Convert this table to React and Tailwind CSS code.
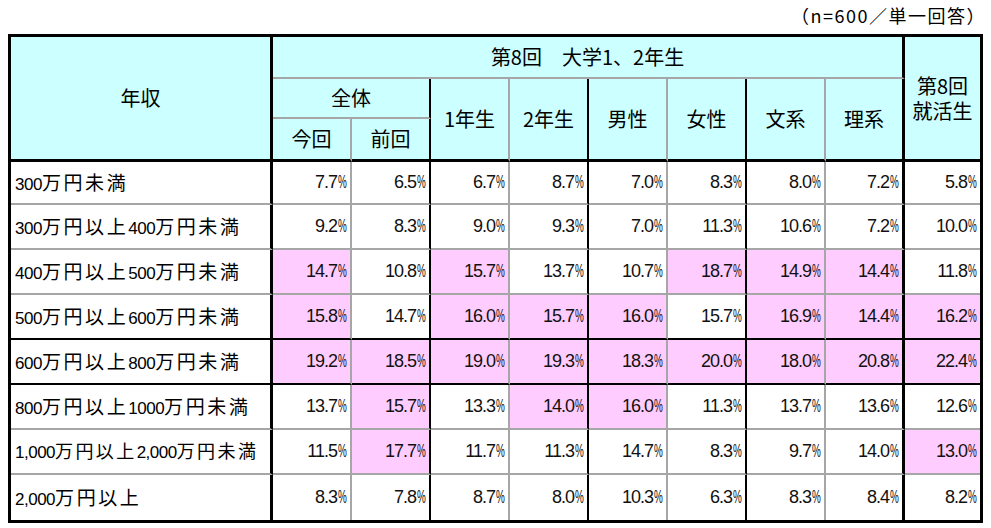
import React from "react";

const rows = [
  { label: "300万円未満", values: ["7.7", "6.5", "6.7", "8.7", "7.0", "8.3", "8.0", "7.2", "5.8"], hi: [] },
  { label: "300万円以上400万円未満", values: ["9.2", "8.3", "9.0", "9.3", "7.0", "11.3", "10.6", "7.2", "10.0"], hi: [] },
  { label: "400万円以上500万円未満", values: ["14.7", "10.8", "15.7", "13.7", "10.7", "18.7", "14.9", "14.4", "11.8"], hi: [0, 2, 5, 6, 7] },
  { label: "500万円以上600万円未満", values: ["15.8", "14.7", "16.0", "15.7", "16.0", "15.7", "16.9", "14.4", "16.2"], hi: [0, 2, 3, 4, 6, 7, 8] },
  { label: "600万円以上800万円未満", values: ["19.2", "18.5", "19.0", "19.3", "18.3", "20.0", "18.0", "20.8", "22.4"], hi: [0, 1, 2, 3, 4, 5, 6, 7, 8] },
  { label: "800万円以上1000万円未満", values: ["13.7", "15.7", "13.3", "14.0", "16.0", "11.3", "13.7", "13.6", "12.6"], hi: [1, 3, 4] },
  { label: "1,000万円以上2,000万円未満", values: ["11.5", "17.7", "11.7", "11.3", "14.7", "8.3", "9.7", "14.0", "13.0"], hi: [1, 8], small: true },
  { label: "2,000万円以上", values: ["8.3", "7.8", "8.7", "8.0", "10.3", "6.3", "8.3", "8.4", "8.2"], hi: [] },
];

// right border of each data column
const colBorder = [
  "border-r-2 border-r-[#a6a6a6]",
  "border-r-2 border-r-black",
  "border-r-2 border-r-[#a6a6a6]",
  "border-r-2 border-r-black",
  "border-r-2 border-r-[#a6a6a6]",
  "border-r-2 border-r-black",
  "border-r-2 border-r-[#a6a6a6]",
  "border-r-[3px] border-r-black",
  "",
];

const rowHeights = ["h-[43px]", "h-[45px]", "h-[45px]", "h-[45px]", "h-[45px]", "h-[45px]", "h-[45px]", "h-[45px]"];

function Label({ text, small }) {
  const parts = text.split(/([0-9,]+)/).filter(Boolean);
  return (
    <span className="whitespace-nowrap">
      {parts.map((p, i) =>
        /[0-9]/.test(p) ? (
          <span key={i} className="font-['Liberation_Sans',sans-serif] text-[17px] tracking-[-0.5px]">
            {p}
          </span>
        ) : (
          <span key={i} className={small ? "text-[18px] tracking-[2.4px]" : "text-[19px] tracking-[2.6px]"}>
            {p}
          </span>
        )
      )}
    </span>
  );
}

function Pct({ value }) {
  return (
    <span className="whitespace-nowrap">
      <span className="tracking-[-1px]">{value}</span>
      <span className="inline-block origin-left scale-x-[0.55] mr-[-7px] ml-[1px]">%</span>
    </span>
  );
}

export default function App() {
  const th = "bg-[#ccffff] font-normal text-[20px] text-center align-middle p-0";
  const thBottom = "border-b-[3px] border-b-black";

  return (
    <div className="w-[991px] h-[528px] bg-white text-black font-['Noto_Sans_CJK_JP',sans-serif]">
      <div className="h-[34px] flex justify-end pr-[5px] pt-[4px] text-[18px] leading-[22px] tracking-[1.5px]">
        （n=600／単一回答）
      </div>
      <div className="pl-[8px]">
        <table className="table-fixed w-[975px] border-separate border-spacing-0 border-[3px] border-black">
          <colgroup>
            <col className="w-[262px]" />
            <col className="w-[79px]" />
            <col className="w-[79px]" />
            <col className="w-[79px]" />
            <col className="w-[79px]" />
            <col className="w-[79px]" />
            <col className="w-[79px]" />
            <col className="w-[79px]" />
            <col className="w-[79px]" />
            <col className="w-[75px]" />
          </colgroup>
          <thead>
            <tr className="h-[42px]">
              <th rowSpan={3} className={`${th} ${thBottom} border-r-[3px] border-r-black`}>
                年収
              </th>
              <th colSpan={8} className={`${th} border-r-[3px] border-r-black border-b-2 border-b-[#a6a6a6] whitespace-pre`}>
                第8回　大学1、2年生
              </th>
              <th rowSpan={3} className={`${th} ${thBottom}`}>
                <div className="leading-[25px]">第8回</div>
                <div className="leading-[25px]">就活生</div>
              </th>
            </tr>
            <tr className="h-[40px]">
              <th colSpan={2} className={`${th} border-r-2 border-r-black border-b-2 border-b-[#a6a6a6]`}>
                全体
              </th>
              <th rowSpan={2} className={`${th} ${thBottom} ${colBorder[2]}`}>1年生</th>
              <th rowSpan={2} className={`${th} ${thBottom} ${colBorder[3]}`}>2年生</th>
              <th rowSpan={2} className={`${th} ${thBottom} ${colBorder[4]}`}>男性</th>
              <th rowSpan={2} className={`${th} ${thBottom} ${colBorder[5]}`}>女性</th>
              <th rowSpan={2} className={`${th} ${thBottom} ${colBorder[6]}`}>文系</th>
              <th rowSpan={2} className={`${th} ${thBottom} ${colBorder[7]}`}>理系</th>
            </tr>
            <tr className="h-[43px]">
              <th className={`${th} ${thBottom} ${colBorder[0]}`}>今回</th>
              <th className={`${th} ${thBottom} ${colBorder[1]}`}>前回</th>
            </tr>
          </thead>
          <tbody>
            {rows.map((row, r) => {
              const last = r === rows.length - 1;
              const bottom = last
                ? ""
                : r === 3 || r === 4
                ? "border-b-2 border-b-black"
                : "border-b-2 border-b-[#a6a6a6]";
              return (
                <tr key={row.label} className={rowHeights[r]}>
                  <td className={`${bottom} border-r-[3px] border-r-black pl-[4px] align-middle`}>
                    <Label text={row.label} small={row.small} />
                  </td>
                  {row.values.map((v, c) => (
                    <td
                      key={c}
                      className={`${bottom} ${colBorder[c]} ${
                        row.hi.includes(c) ? "bg-[#ffccff]" : "bg-white"
                      } text-right pr-[3px] align-middle font-['Liberation_Sans',sans-serif] text-[18px] text-[#111]`}
                    >
                      <Pct value={v} />
                    </td>
                  ))}
                </tr>
              );
            })}
          </tbody>
        </table>
      </div>
    </div>
  );
}
